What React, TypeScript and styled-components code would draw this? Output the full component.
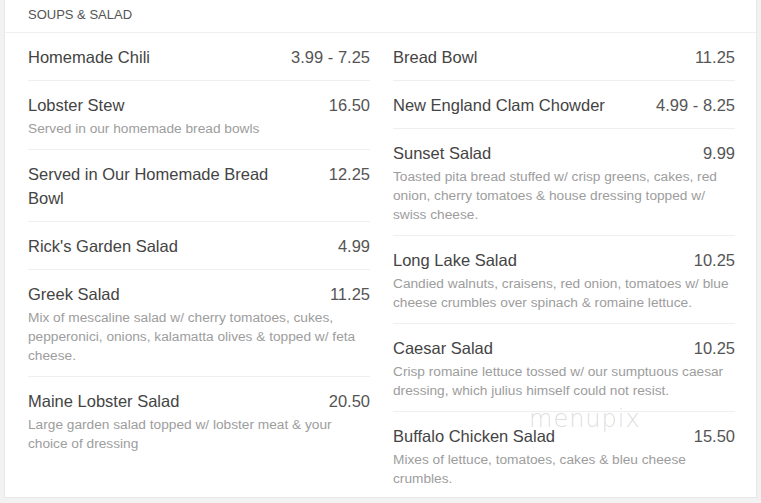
import React from "react";
import styled, { createGlobalStyle } from "styled-components";

const Global = createGlobalStyle`
  html, body { margin: 0; padding: 0; background: #f2f2f2; }
  body { font-family: "Liberation Sans", Arial, sans-serif; }
`;

const Page = styled.div`
  padding: 0 4px 5px 4px;
  width: 761px;
  box-sizing: border-box;
`;

const Card = styled.section`
  position: relative;
  background: #fff;
  border: 1px solid #e8e8e8;
  border-top: none;
  padding: 0 21px 0 23px;
`;

const Header = styled.h2`
  height: 33px;
  box-sizing: border-box;
  display: flex;
  align-items: center;
  font-size: 13px;
  font-weight: normal;
  color: #555;
  text-transform: uppercase;
  border-bottom: 1px solid #f0f0f0;
  margin: 0 -21px 0 -23px;
  padding: 0 23px 3px;
`;

const Columns = styled.div`
  display: grid;
  grid-template-columns: 342px 342px;
  column-gap: 23px;
  align-items: start;
`;

const Column = styled.div`
  display: flex;
  flex-direction: column;
`;

const Row = styled.div`
  padding: 12px 0 11px;
  border-bottom: 1px solid #efefef;
  &:last-child { border-bottom: none; padding-bottom: 9px; }
`;

const Top = styled.div`
  display: flex;
  justify-content: space-between;
  align-items: flex-start;
  gap: 20px;
`;

const Name = styled.div`
  font-size: 16.5px;
  line-height: 24px;
  color: #444;
  max-width: 260px;
`;

const Price = styled.div`
  font-size: 16.5px;
  line-height: 24px;
  color: #555;
  white-space: nowrap;
`;

const Desc = styled.div`
  margin-top: 2px;
  font-size: 13.7px;
  line-height: 19px;
  color: #9d9d9d;
`;

const Watermark = styled.div`
  position: absolute;
  left: 524px;
  top: 405px;
  font-family: "DejaVu Sans", sans-serif;
  font-weight: 200;
  font-size: 24px;
  letter-spacing: 1px;
  color: rgba(170, 170, 170, 0.4);
  pointer-events: none;
`;

type Item = { name: string; price: string; desc?: string };

const left: Item[] = [
  { name: "Homemade Chili", price: "3.99 - 7.25" },
  { name: "Lobster Stew", price: "16.50", desc: "Served in our homemade bread bowls" },
  { name: "Served in Our Homemade Bread Bowl", price: "12.25" },
  { name: "Rick's Garden Salad", price: "4.99" },
  {
    name: "Greek Salad",
    price: "11.25",
    desc: "Mix of mescaline salad w/ cherry tomatoes, cukes, pepperonici, onions, kalamatta olives & topped w/ feta cheese.",
  },
  {
    name: "Maine Lobster Salad",
    price: "20.50",
    desc: "Large garden salad topped w/ lobster meat & your choice of dressing",
  },
];

const right: Item[] = [
  { name: "Bread Bowl", price: "11.25" },
  { name: "New England Clam Chowder", price: "4.99 - 8.25" },
  {
    name: "Sunset Salad",
    price: "9.99",
    desc: "Toasted pita bread stuffed w/ crisp greens, cakes, red onion, cherry tomatoes & house dressing topped w/ swiss cheese.",
  },
  {
    name: "Long Lake Salad",
    price: "10.25",
    desc: "Candied walnuts, craisens, red onion, tomatoes w/ blue cheese crumbles over spinach & romaine lettuce.",
  },
  {
    name: "Caesar Salad",
    price: "10.25",
    desc: "Crisp romaine lettuce tossed w/ our sumptuous caesar dressing, which julius himself could not resist.",
  },
  {
    name: "Buffalo Chicken Salad",
    price: "15.50",
    desc: "Mixes of lettuce, tomatoes, cakes & bleu cheese crumbles.",
  },
];

const MenuRow = ({ item }: { item: Item }) => (
  <Row>
    <Top>
      <Name>{item.name}</Name>
      <Price>{item.price}</Price>
    </Top>
    {item.desc && <Desc>{item.desc}</Desc>}
  </Row>
);

export default function App() {
  return (
    <Page>
      <Global />
      <Card>
        <Header>Soups &amp; Salad</Header>
        <Columns>
          <Column>
            {left.map((it) => (
              <MenuRow key={it.name} item={it} />
            ))}
          </Column>
          <Column>
            {right.map((it) => (
              <MenuRow key={it.name} item={it} />
            ))}
          </Column>
        </Columns>
        <Watermark>menupix</Watermark>
      </Card>
    </Page>
  );
}
